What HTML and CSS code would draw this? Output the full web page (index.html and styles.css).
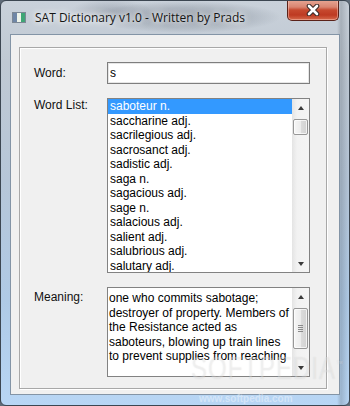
FILE: index.html
```html
<!DOCTYPE html>
<html lang="en">
<head>
  <meta charset="UTF-8" />
  <title>SAT Dictionary v1.0 - Written by Prads</title>
  <link rel="stylesheet" href="styles.css">
</head>
<body>
  <div class="window">
    <div class="titlebar">
      <svg class="app-icon" width="14" height="11" viewBox="0 0 14 11">
        <rect x="0.5" y="0.5" width="13" height="10" fill="#dfe6ee" stroke="#7b8794" />
        <rect x="1" y="1" width="4" height="9" fill="#6f86a6" />
        <rect x="5" y="1" width="4" height="9" fill="#eef3ea" />
        <rect x="9" y="1" width="4" height="9" fill="#3fa676" />
      </svg>
      <span class="title">SAT Dictionary v1.0 - Written by Prads</span>
      <div class="close">
        <svg width="16" height="12" viewBox="0 0 16 12">
          <path d="M4 2 L12 10 M12 2 L4 10" stroke="#3a2a28" stroke-width="4.6" stroke-linecap="round" />
          <path d="M4 2 L12 10 M12 2 L4 10" stroke="#ffffff" stroke-width="2.6" stroke-linecap="round" />
        </svg>
      </div>
    </div>

    <div class="client">
      <div class="group">
        <div class="label label-word">Word:</div>
        <div class="textbox">s</div>

        <div class="label">Word List:</div>
        <div class="listbox">
          <ul class="items">
            <li class="selected">saboteur n.</li>
            <li>saccharine adj.</li>
            <li>sacrilegious adj.</li>
            <li>sacrosanct adj.</li>
            <li>sadistic adj.</li>
            <li>saga n.</li>
            <li>sagacious adj.</li>
            <li>sage n.</li>
            <li>salacious adj.</li>
            <li>salient adj.</li>
            <li>salubrious adj.</li>
            <li>salutary adj.</li>
          </ul>
          <div class="vscroll">
            <span class="arrow up"></span>
            <span class="thumb"></span>
            <span class="arrow down"></span>
          </div>
        </div>

        <div class="label label-meaning">Meaning:</div>
        <div class="listbox meaning">
          <div class="meaning-text">
            one who commits sabotage;<br>
            destroyer of property. Members of<br>
            the Resistance acted as<br>
            saboteurs, blowing up train lines<br>
            to prevent supplies from reaching
          </div>
          <div class="vscroll">
            <span class="arrow up"></span>
            <span class="thumb thumb-big"><span class="grip"></span></span>
            <span class="arrow down"></span>
          </div>
        </div>
      </div>
    </div>

    <div class="watermark">SOFTPEDIA<sup>™</sup></div>
    <div class="watermark-url">www.softpedia.com</div>
  </div>
</body>
</html>
```

FILE: styles.css
```css
body {
  margin: 0;
  width: 350px;
  height: 406px;
  overflow: hidden;
  background-color: #5f6b78;
  font-family: "Liberation Sans", Arial, sans-serif;
  font-size: 12px;
  color: #000;
}

.window {
  position: relative;
  box-sizing: border-box;
  width: 350px;
  height: 406px;
  border: 1px solid #3c4651;
  border-radius: 6px;
  padding: 0 9px 10px 9px;
  display: flex;
  flex-direction: column;
  overflow: hidden;
  background:
    radial-gradient(ellipse 95px 16px at 185px 16px, rgba(60, 70, 85, 0.45), rgba(60, 70, 85, 0)),
    radial-gradient(ellipse 40px 12px at 110px 10px, rgba(90, 100, 115, 0.3), rgba(90, 100, 115, 0)),
    linear-gradient(to right, rgba(0, 0, 0, 0) 336px, rgba(70, 80, 90, 0.25) 340px, rgba(0, 0, 0, 0) 348px),
    linear-gradient(to bottom, #c9d1da 0, #c0c9d3 60px, #b6c6d8 180px, #afcae6 300px, #b8d6f5 406px);
}

.titlebar {
  height: 33px;
  display: flex;
  align-items: center;
  padding-left: 2px;
}

.app-icon {
  flex-shrink: 0;
}

.title {
  margin-left: 9px;
  font-family: "Open Sans", "Noto Sans", sans-serif;
  font-size: 12px;
  color: #151515;
  text-shadow: 0 0 5px #fff, 0 0 9px rgba(255, 255, 255, 0.9), 0 0 14px rgba(255, 255, 255, 0.7);
  white-space: nowrap;
}

.close {
  margin-left: auto;
  align-self: flex-start;
  margin-top: -1px;
  margin-right: 1px;
  width: 52px;
  height: 21px;
  box-sizing: border-box;
  border: 1px solid #5a2219;
  border-top: none;
  border-radius: 0 0 5px 5px;
  background: linear-gradient(to bottom, #e7a795 0, #d98571 35%, #c6492f 50%, #be3a22 75%, #d66a4c 100%);
  box-shadow: inset 0 0 0 1px rgba(255, 210, 200, 0.45);
  display: flex;
  justify-content: center;
  align-items: center;
}

.client {
  flex: 1;
  display: flex;
  border: 1px solid #8394a6;
  background-color: #f0f0f0;
  padding: 12px 12px 5px 8px;
}

.group {
  flex: 1;
  border: 1px solid #a8a8a8;
  box-shadow: inset 1px 1px 0 #fff, 1px 1px 0 #fff;
  padding: 14px 0 0 14px;
  display: grid;
  grid-template-columns: 73px 203px;
  grid-template-rows: 22px 175px 90px;
  row-gap: 14px;
  align-content: start;
}

.label {
  line-height: 14.5px;
  color: #111;
}

.label-word {
  padding-top: 4px;
}

.label-meaning {
  padding-top: 3px;
}

.textbox {
  box-sizing: border-box;
  border: 1px solid #7e7e7e;
  box-shadow: inset 0 0 0 1px #e6e6e6;
  background-color: #fff;
  padding: 0 2px;
  line-height: 20px;
}

.listbox {
  box-sizing: border-box;
  border: 1px solid #828282;
  background-color: #fff;
  display: flex;
  overflow: hidden;
}

.items {
  flex: 1;
  list-style: none;
  margin: 0;
  padding: 0;
  overflow: hidden;
}

.items li {
  height: 14.5px;
  line-height: 14.5px;
  padding-left: 2px;
  white-space: nowrap;
}

.items li.selected {
  background-color: #3399ff;
  color: #fff;
}

.meaning-text {
  flex: 1;
  padding: 3px 0 0 1px;
  line-height: 14.5px;
  overflow: hidden;
  white-space: nowrap;
}

.vscroll {
  width: 17px;
  flex-shrink: 0;
  display: flex;
  flex-direction: column;
  align-items: center;
  background: linear-gradient(to right, #e4e4e4, #f2f2f2 30%, #f4f4f4);
}

.arrow {
  height: 17px;
  width: 17px;
  display: flex;
  justify-content: center;
  align-items: center;
}

.arrow::before {
  content: "";
  width: 0;
  height: 0;
  border-left: 3.5px solid transparent;
  border-right: 3.5px solid transparent;
}

.arrow.up::before {
  border-bottom: 4px solid #3a3a3a;
}

.arrow.down {
  margin-top: auto;
}

.arrow.down::before {
  border-top: 4px solid #3a3a3a;
}

.thumb {
  box-sizing: border-box;
  width: 15px;
  height: 16px;
  margin-top: 3px;
  border: 1px solid #979797;
  border-radius: 2px;
  background: linear-gradient(to right, #f6f6f6, #ececec 50%, #dcdcdc 51%, #d2d2d2);
  box-shadow: inset 0 0 0 1px rgba(255, 255, 255, 0.7);
  display: flex;
  justify-content: center;
  align-items: center;
}

.thumb-big {
  height: 41px;
}

.grip {
  width: 5px;
  height: 7px;
  background: repeating-linear-gradient(to bottom, #8a8a8a 0, #8a8a8a 1px, transparent 1px, transparent 2px);
}

.watermark {
  position: absolute;
  left: 190px;
  top: 344px;
  font-family: "Liberation Sans", Arial, sans-serif;
  font-size: 24px;
  line-height: 30px;
  letter-spacing: 1px;
  color: rgba(255, 255, 255, 0.3);
  text-shadow: 0 0 1px rgba(120, 120, 120, 0.18);
  transform: scaleY(1.3);
  transform-origin: top left;
  white-space: nowrap;
  pointer-events: none;
}

.watermark sup {
  font-size: 7px;
}

.watermark-url {
  position: absolute;
  left: 198px;
  top: 392px;
  font-size: 10px;
  font-weight: 700;
  color: rgba(255, 255, 255, 0.4);
  pointer-events: none;
}
```
